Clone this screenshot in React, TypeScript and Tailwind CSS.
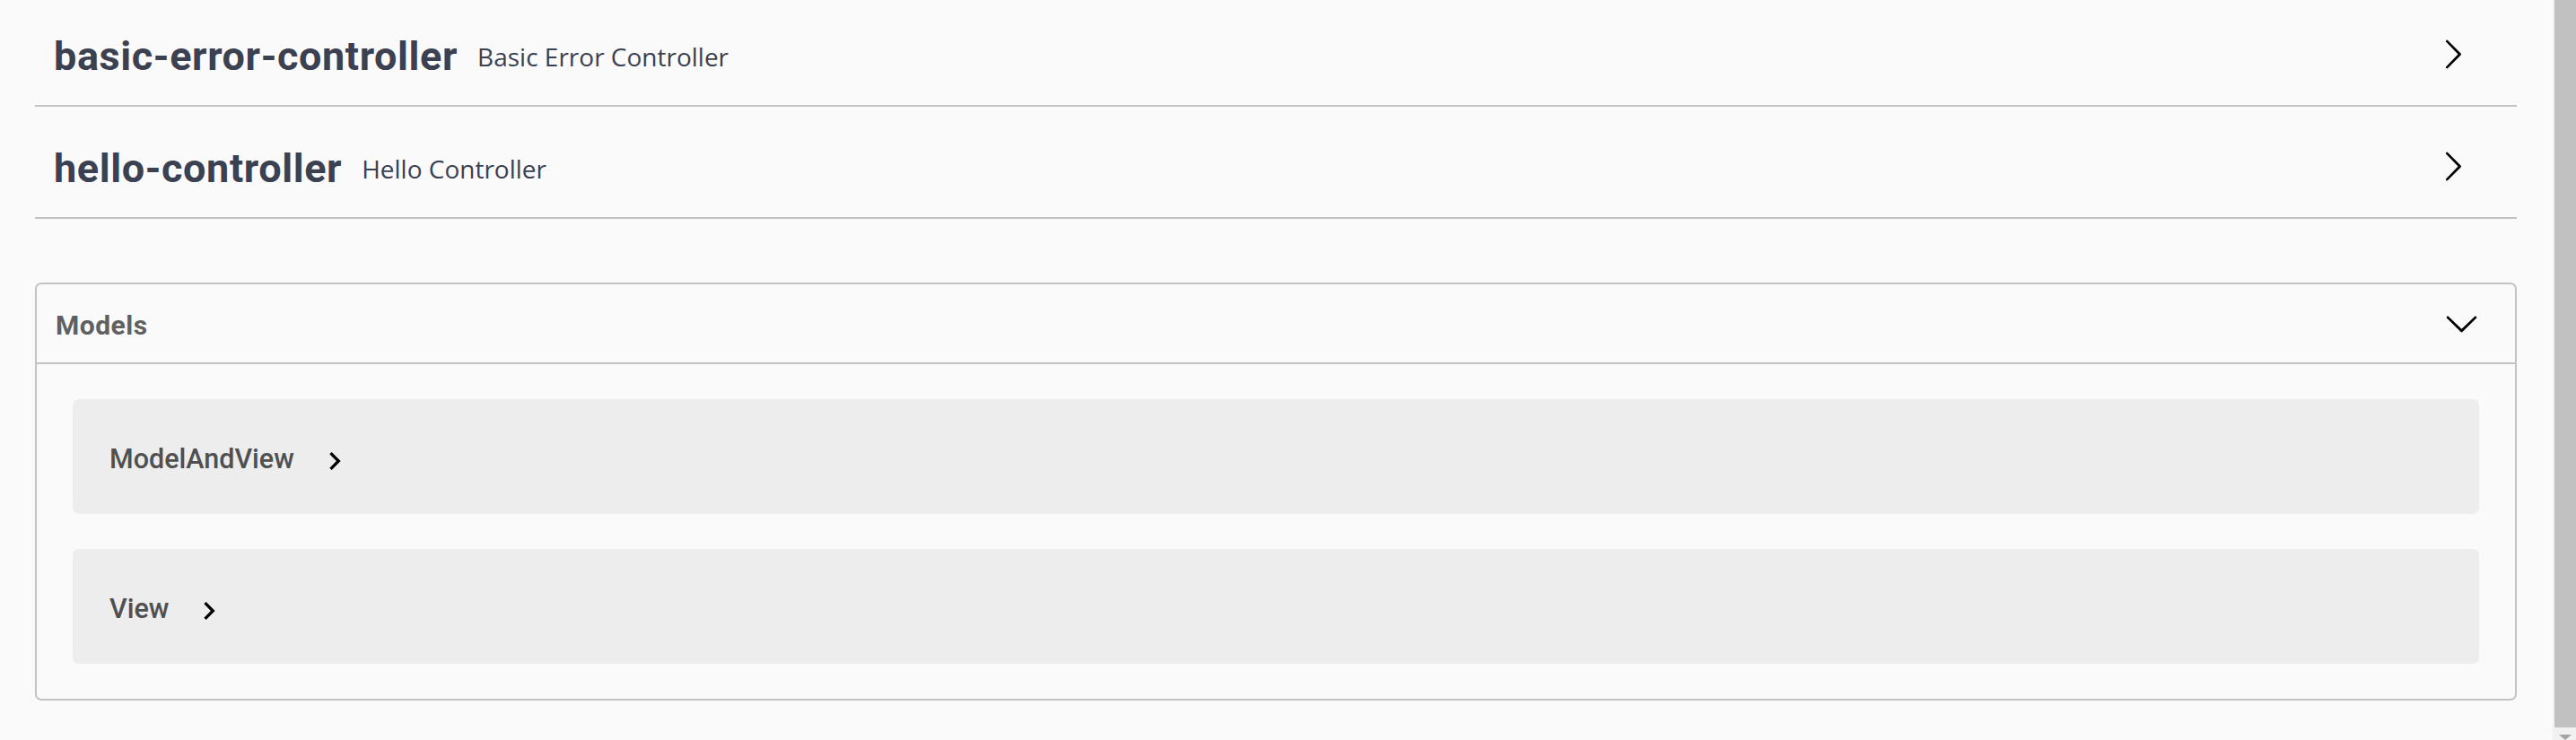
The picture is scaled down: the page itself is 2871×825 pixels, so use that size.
import type { ReactNode } from "react";

const tags = [
  { name: "basic-error-controller", description: "Basic Error Controller" },
  { name: "hello-controller", description: "Hello Controller" },
];

const models = ["ModelAndView", "View"];

function ArrowRight() {
  return (
    <svg
      className="ml-auto mr-[53px] h-[37px] w-[37px] shrink-0"
      viewBox="0 0 20 20"
      fill="#000"
      aria-hidden="true"
    >
      <path d="M13.25 10L6.109 2.58a.697.697 0 0 1 0-.979.68.68 0 0 1 .969 0l7.83 7.908a.697.697 0 0 1 0 .979l-7.83 7.909a.68.68 0 0 1-.969 0 .697.697 0 0 1 0-.979L13.25 10z" />
    </svg>
  );
}

function ArrowDown() {
  return (
    <svg
      className="ml-auto mr-[40px] h-[39px] w-[39px] shrink-0"
      viewBox="0 0 20 20"
      fill="#000"
      aria-hidden="true"
    >
      <path d="M17.418 6.109c.272-.268.709-.268.979 0s.271.701 0 .969l-7.908 7.83c-.27.268-.707.268-.979 0l-7.908-7.83c-.27-.268-.27-.701 0-.969.271-.268.709-.268.979 0L10 13.25l7.418-7.141z" />
    </svg>
  );
}

function ModelToggle() {
  return (
    <svg
      className="ml-[25px] mt-[10px] h-[40px] w-[40px] shrink-0"
      viewBox="0 0 24 24"
      fill="#000"
      aria-hidden="true"
    >
      <path d="M10 6L8.59 7.41 13.17 12l-4.58 4.59L10 18l6-6z" />
    </svg>
  );
}

function TagRow({ name, description }: { name: string; description: string }) {
  return (
    <div className="mb-[9px] flex h-[116px] items-center border-b-2 border-[#c1c3c7] pl-[21px]">
      <h3 className="pt-[6px] font-['Roboto',sans-serif] text-[45px] font-bold tracking-[0.6px] text-[#3b4151]">
        {name}
      </h3>
      <small className="ml-[22px] pt-[5px] font-['Open_Sans',sans-serif] text-[28px] text-[#3b4151]">
        {description}
      </small>
      <ArrowRight />
    </div>
  );
}

function ModelBox({ children }: { children: ReactNode }) {
  return (
    <div className="flex h-[128px] items-center rounded-[7px] bg-[#ededed] pl-[41px]">
      <span className="pt-[6px] font-['Roboto',sans-serif] text-[30.5px] font-medium text-[#505050]">
        {children}
      </span>
      <ModelToggle />
    </div>
  );
}

function Scrollbar() {
  return (
    <div className="flex h-full w-[26px] shrink-0 flex-col bg-[#f1f1f1] pl-[2px]">
      <div className="h-[811px] w-full bg-[#c1c1c1]" />
      <div className="flex flex-1 items-end justify-center">
        <div className="h-0 w-0 border-x-[7px] border-t-[6px] border-x-transparent border-t-[#a3a3a3]" />
      </div>
    </div>
  );
}

export default function App() {
  return (
    <div className="flex h-[825px] w-full overflow-hidden bg-[#fafafa]">
      <main className="flex min-w-0 flex-1 flex-col pl-[39px] pr-[40px] pt-[3px]">
        {tags.map((t) => (
          <TagRow key={t.name} name={t.name} description={t.description} />
        ))}

        <section className="mt-[62px] rounded-[7px] border-2 border-[#c1c3c7]">
          <div className="flex h-[89px] items-center border-b-2 border-[#c1c3c7] pl-[21px]">
            <h4 className="pt-[3px] font-['Roboto',sans-serif] text-[30px] font-bold tracking-[0.5px] text-[#606060]">
              Models
            </h4>
            <ArrowDown />
          </div>
          <div className="flex flex-col gap-[39px] px-[40px] py-[39px]">
            {models.map((m) => (
              <ModelBox key={m}>{m}</ModelBox>
            ))}
          </div>
        </section>
      </main>
      <Scrollbar />
    </div>
  );
}
